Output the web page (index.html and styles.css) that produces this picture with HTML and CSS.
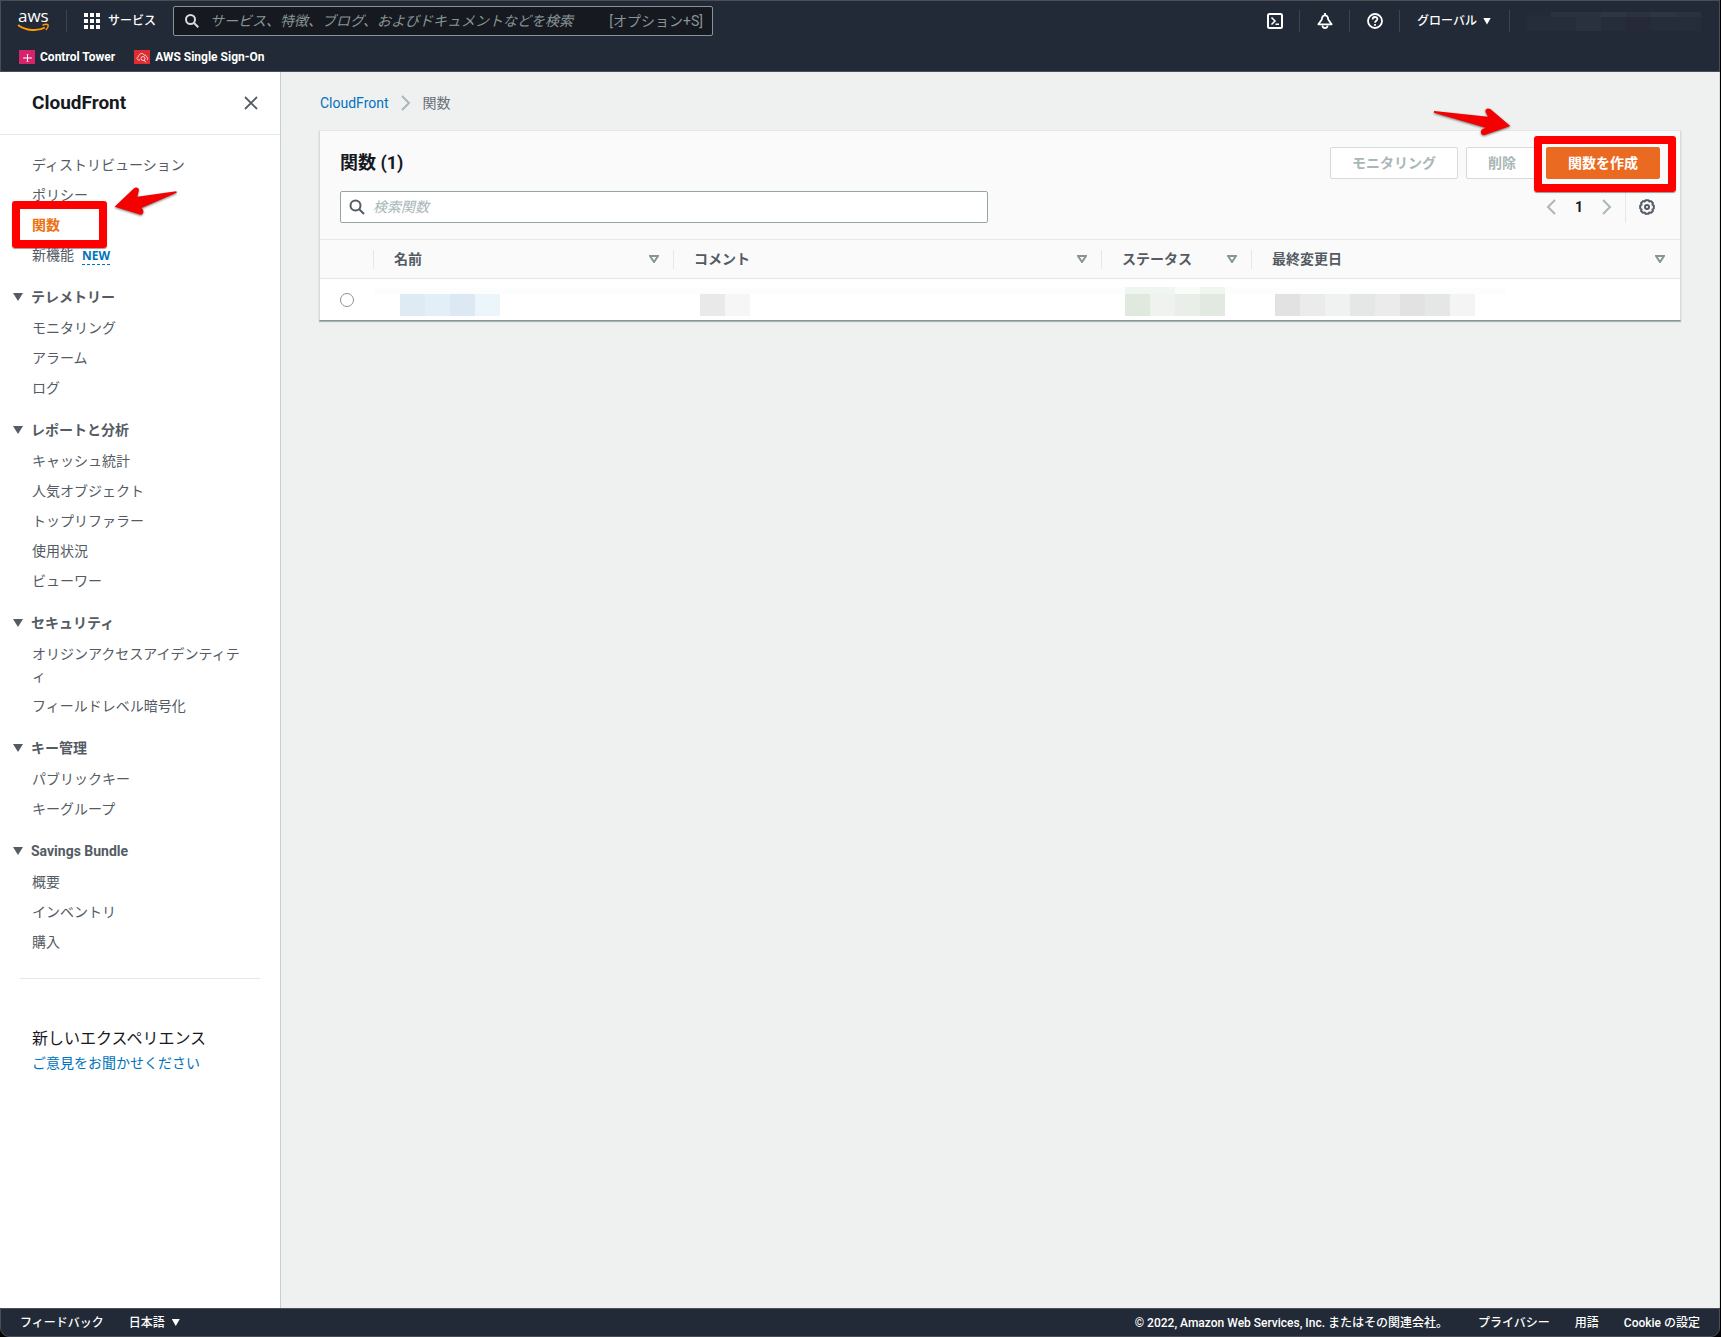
FILE: index.html
```html
<!DOCTYPE html>
<html lang="ja">
<head>
<meta charset="utf-8">
<meta name="viewport" content="width=device-width, initial-scale=1">
<title>CloudFront - 関数</title>
<link rel="stylesheet" href="styles.css">
</head>
<body>
<div class="app">
  <header class="topbar">
    <div class="topbar-row">
      <a class="logo" href="#" aria-label="AWS">
        <svg width="34" height="32" viewBox="0 -8 34 32">
          <text class="logo-text" x="1" y="13">aws</text>
          <path d="M1 16C9 22 21 22.500 28 18.500" fill="none" stroke="#f90" stroke-width="2"/>
          <path d="M25.500 16.200C28 15.300 30.500 15.300 31 16C31.500 17 30.500 19.500 28.800 21" fill="none" stroke="#f90" stroke-width="1.500"/>
        </svg>
      </a>
      <button class="services" type="button">
        <svg width="16" height="16" viewBox="0 0 16 16" fill="#fff"><path d="M0 0h4v4H0zM6 0h4v4H6zM12 0h4v4h-4zM0 6h4v4H0zM6 6h4v4H6zM12 6h4v4h-4zM0 12h4v4H0zM6 12h4v4H6zM12 12h4v4h-4z"/></svg>
        <span>サービス</span>
      </button>
      <label class="global-search">
        <svg width="14" height="14" viewBox="0 0 14 14" fill="none" stroke="#d5dbdb" stroke-width="2"><circle cx="5.500" cy="5.500" r="4.500"/><path d="M9 9l4.300 4.300"/></svg>
        <input type="search" aria-label="検索" placeholder="サービス、特徴、ブログ、およびドキュメントなどを検索">
        <span class="shortcut">[オプション+S]</span>
      </label>
      <div class="tools">
        <button class="tool" type="button" aria-label="CloudShell">
          <svg width="16" height="16" viewBox="0 0 16 16" fill="none" stroke="#fff" stroke-width="2"><rect x="1" y="1" width="14" height="14" rx="1.500"/><path d="M4.500 4.500L8 8l-3.500 3.500M8.500 11.200H12" stroke-width="1.600"/></svg>
        </button>
        <button class="tool" type="button" aria-label="通知">
          <svg width="16" height="16" viewBox="0 0 16 16" fill="none" stroke="#fff" stroke-width="1.800"><path d="M8 0v2M4.800 6.500C5 3.500 6 2.300 8 2.300S11 3.500 11.200 6.500L14.600 11.300H1.400z" stroke-linejoin="round"/><path d="M5.500 12.500C5.500 15.800 10.500 15.800 10.500 12.500"/></svg>
        </button>
        <button class="tool" type="button" aria-label="ヘルプ">
          <svg width="16" height="16" viewBox="0 0 16 16" fill="none" stroke="#fff" stroke-width="1.800"><circle cx="8" cy="8" r="7"/><path d="M5.600 6.400C5.600 3.200 10.400 3.300 10.400 6.100C10.400 7.800 8 7.700 8 9.800M8 11v1.800"/></svg>
        </button>
        <button class="region" type="button"><span>グローバル</span><span class="caret"></span></button>
        <div class="account" aria-hidden="true"><i></i><i></i><i></i><i></i><i></i><i></i><i></i></div>
      </div>
    </div>
    <nav class="favorites" aria-label="お気に入り">
      <a href="#"><svg width="16" height="14" viewBox="0 0 16 14"><rect width="16" height="14" fill="#d6246c"/><path d="M8.500 4v8M4.500 8h8" stroke="#fff" fill="none"/><path d="M7.500 4.500h2M7.500 11.500h2M5 7v2M12 7v2" stroke="#ffb3d0" fill="none"/></svg>Control Tower</a>
      <a href="#"><svg width="16" height="14" viewBox="0 0 16 14"><rect width="16" height="14" fill="#dd2c32"/><path d="M6 10H4.500C2.500 9.500 2.500 7 4.500 6.700C4.700 3.200 9 2.500 10.300 5.200C12 4.800 12.500 6 12.500 7C14 7.500 14 9 13 10" stroke="#ffd2d2" fill="none"/><circle cx="9" cy="8.500" r="2" stroke="#ffd2d2" fill="none"/><path d="M10 10l2 2.500" stroke="#ffd2d2"/></svg>AWS Single Sign-On</a>
    </nav>
  </header>

  <div class="body">
    <aside class="sidebar">
      <div class="sidebar-head">
        <h2>CloudFront</h2>
        <button type="button" aria-label="閉じる"><svg width="14" height="14" viewBox="0 0 14 14" stroke="#545b64" stroke-width="1.800"><path d="M1 1l12 12M13 1L1 13"/></svg></button>
      </div>
      <nav class="side-nav">
        <ul>
          <li><a href="#">ディストリビューション</a></li>
          <li><a href="#">ポリシー</a></li>
          <li class="current"><a href="#" aria-current="page">関数</a>
            <span class="mark mark-nav"></span>
            <svg class="arrow arrow-nav" width="64" height="30" viewBox="0 0 192 90"><path d="M2 59L61 3C68-2 78 4 74 12L70 29L187 13L188 17L82 63L87 68C91 78 84 86 75 82Z"/></svg>
          </li>
          <li><a href="#">新機能</a><a class="new" href="#">NEW</a></li>
        </ul>
        <section>
          <h3><button type="button" aria-expanded="true"><span class="caret"></span>テレメトリー</button></h3>
          <ul><li><a href="#">モニタリング</a></li><li><a href="#">アラーム</a></li><li><a href="#">ログ</a></li></ul>
        </section>
        <section>
          <h3><button type="button" aria-expanded="true"><span class="caret"></span>レポートと分析</button></h3>
          <ul><li><a href="#">キャッシュ統計</a></li><li><a href="#">人気オブジェクト</a></li><li><a href="#">トップリファラー</a></li><li><a href="#">使用状況</a></li><li><a href="#">ビューワー</a></li></ul>
        </section>
        <section>
          <h3><button type="button" aria-expanded="true"><span class="caret"></span>セキュリティ</button></h3>
          <ul><li><a href="#">オリジンアクセスアイデンティティ</a></li><li><a href="#">フィールドレベル暗号化</a></li></ul>
        </section>
        <section>
          <h3><button type="button" aria-expanded="true"><span class="caret"></span>キー管理</button></h3>
          <ul><li><a href="#">パブリックキー</a></li><li><a href="#">キーグループ</a></li></ul>
        </section>
        <section>
          <h3><button type="button" aria-expanded="true"><span class="caret"></span>Savings Bundle</button></h3>
          <ul><li><a href="#">概要</a></li><li><a href="#">インベントリ</a></li><li><a href="#">購入</a></li></ul>
        </section>
      </nav>
      <div class="experience">
        <p>新しいエクスペリエンス</p>
        <a href="#">ご意見をお聞かせください</a>
      </div>
    </aside>

    <main class="content">
      <nav class="breadcrumb" aria-label="パンくずリスト">
        <a href="#">CloudFront</a>
        <svg width="10" height="16" viewBox="0 0 10 16" fill="none" stroke="#aab7b8" stroke-width="2"><path d="M1 1l7 7-7 7"/></svg>
        <span>関数</span>
      </nav>
      <section class="card">
        <div class="card-head">
          <div class="title-row">
            <h1>関数 (1)</h1>
            <div class="actions">
              <button class="btn" type="button" disabled>モニタリング</button>
              <button class="btn" type="button" disabled>削除</button>
              <span class="create">
                <button class="btn primary" type="button">関数を作成</button>
                <span class="mark mark-create"></span>
                <svg class="arrow arrow-create" width="80" height="30" viewBox="0 0 240 90"><path d="M3 12L3 17L158 62L148 67C139 73 145 86 155 84L232 57L172 6C162 1 155 8 158 15L165 29Z"/></svg>
              </span>
            </div>
          </div>
          <div class="filter-row">
            <label class="filter">
              <svg width="16" height="16" viewBox="0 0 16 16" fill="none" stroke="#545b64" stroke-width="2"><circle cx="6.500" cy="6.500" r="5"/><path d="M10 10l5 5"/></svg>
              <input type="search" aria-label="検索関数" placeholder="検索関数">
            </label>
            <div class="pager">
              <button type="button" aria-label="前へ"><svg width="10" height="16" viewBox="0 0 10 16" fill="none" stroke="#aab7b8" stroke-width="2"><path d="M9 1L2 8l7 7"/></svg></button>
              <b>1</b>
              <button type="button" aria-label="次へ"><svg width="10" height="16" viewBox="0 0 10 16" fill="none" stroke="#aab7b8" stroke-width="2"><path d="M1 1l7 7-7 7"/></svg></button>
              <button class="settings" type="button" aria-label="設定"><svg width="16" height="16" viewBox="0 0 16 16" fill="none" stroke="#545b64" stroke-width="2"><path d="M6.500 1.200h3L10.300 2.600L12 2.100L13.900 4L13.400 5.700L14.800 6.500v3L13.400 10.300L13.900 12L12 13.900L10.300 13.400L9.500 14.800h-3L5.700 13.400L4 13.900L2.100 12L2.600 10.300L1.200 9.500v-3L2.600 5.700L2.100 4L4 2.100L5.700 2.600z" stroke-linejoin="round"/><circle cx="8" cy="8" r="2"/></svg></button>
            </div>
          </div>
        </div>
        <table>
          <colgroup><col class="c-select"><col class="c-name"><col><col class="c-status"><col></colgroup>
          <thead>
            <tr>
              <th aria-label="選択"></th>
              <th><div>名前<svg class="sort" width="10" height="8" viewBox="0 0 10 8"><path d="M1 1h8L5 7z"/></svg></div></th>
              <th><div>コメント<svg class="sort" width="10" height="8" viewBox="0 0 10 8"><path d="M1 1h8L5 7z"/></svg></div></th>
              <th><div>ステータス<svg class="sort" width="10" height="8" viewBox="0 0 10 8"><path d="M1 1h8L5 7z"/></svg></div></th>
              <th><div>最終変更日<svg class="sort" width="10" height="8" viewBox="0 0 10 8"><path d="M1 1h8L5 7z"/></svg></div></th>
            </tr>
          </thead>
          <tbody>
            <tr>
              <td class="pick"><input type="radio" name="fn" aria-label="関数を選択"></td>
              <td><div class="mosaic name"><i></i><i></i><i></i><i></i></div></td>
              <td><div class="mosaic comment"><i></i><i></i></div></td>
              <td><div class="mosaic status"><i></i><i></i><i></i><i></i></div></td>
              <td><div class="mosaic date"><i></i><i></i><i></i><i></i><i></i><i></i><i></i><i></i></div></td>
            </tr>
          </tbody>
        </table>
      </section>
    </main>
  </div>

  <footer class="footer">
    <div class="footer-group">
      <a href="#">フィードバック</a>
      <button type="button">日本語<span class="caret"></span></button>
    </div>
    <div class="footer-group">
      <span class="copyright">© 2022, Amazon Web Services, Inc. またはその関連会社。</span>
      <a href="#">プライバシー</a>
      <a href="#">用語</a>
      <a href="#">Cookie の設定</a>
    </div>
  </footer>
</div>
</body>
</html>
```
FILE: styles.css
```css
* { box-sizing: border-box; }

body {
  margin: 0;
  background: #000;
  color: #16191f;
  font: 14px/22px Roboto, "Noto Sans CJK JP", sans-serif;
}

a { color: #0073bb; text-decoration: none; }
ul { list-style: none; margin: 0; padding: 0; }
h1, h2, h3, p { margin: 0; }
svg { display: block; flex: none; }

button, input { font: inherit; color: inherit; }
button { border: 0; padding: 0; background: none; cursor: pointer; }
input { border: 0; padding: 0; background: none; outline: 0; min-width: 0; }
input::placeholder { font-style: italic; opacity: 1; }

.app {
  display: flex;
  flex-direction: column;
  min-height: 100vh;
  margin-right: 1px;
}

.caret {
  display: block;
  flex: none;
  width: 10px;
  height: 8px;
  background: currentColor;
  clip-path: polygon(0 0, 100% 0, 50% 100%);
}

/* Top bar */
.topbar {
  background: #212a36;
  border: 1px solid #4b4f55;
  color: #fff;
  font-size: 12px;
  font-weight: 500;
}

.topbar-row { display: flex; align-items: center; height: 40px; padding: 0 18px 0 16px; }
.logo { display: block; margin-top: -8px; padding-right: 15px; }
.logo-text { fill: #fff; font: 500 17px "Open Sans", sans-serif; }

.services {
  display: flex;
  align-items: center;
  gap: 8px;
  height: 22px;
  padding: 0 17px;
  border-left: 1px solid #3c4550;
}

.global-search {
  display: flex;
  align-items: center;
  gap: 11px;
  width: 540px;
  height: 30px;
  padding: 0 9px 0 11px;
  background: #16191f;
  border: 1px solid #879596;
  border-radius: 2px;
  color: #879596;
  font-size: 14px;
  font-weight: 400;
}
.global-search input { flex: 1; }
.global-search input::placeholder { color: #879596; }

.tools { display: flex; align-items: center; margin-left: auto; }
.tool, .region { display: flex; align-items: center; height: 22px; border-right: 1px solid #3c4550; }
.tool { width: 50px; justify-content: center; }
.region { gap: 6px; padding: 0 18px 0 17px; }
.region .caret, .footer .caret { width: 8px; height: 7px; }

.account { display: flex; margin-left: 16px; }
.account i { width: 25px; height: 19px; background: #242d39; border-top: 5px solid #29323e; }
.account i:first-child { border-top-color: #222b37; }
.account i:nth-child(3) { background: #29313e; }
.account i:nth-child(4), .account i:nth-child(6) { border-top-color: #2e3642; }
.account i:nth-child(5) { background: #262a38; }

.favorites { display: flex; align-items: center; gap: 19px; height: 30px; padding: 1px 18px 0; }
.favorites a { display: flex; align-items: center; gap: 5px; color: #fff; font-weight: 700; }

/* Side navigation */
.body { display: flex; flex: 1; }
.sidebar { flex: none; width: 281px; background: #fff; border-right: 1px solid #c9cfd0; }

.sidebar-head {
  display: flex;
  align-items: center;
  justify-content: space-between;
  height: 63px;
  padding: 0 22px 0 32px;
  border-bottom: 1px solid #e4e8e8;
}
.sidebar-head h2 { font-size: 19px; line-height: 22px; }

.side-nav { margin: 0 20px; padding: 19px 0 17px; border-bottom: 1px solid #e4e8e8; color: #545b64; }
.side-nav li { position: relative; display: flex; align-items: baseline; margin-bottom: 8px; padding: 0 16px 0 12px; }
.side-nav li a { color: inherit; }
.side-nav .current a { color: #ec7211; font-weight: 700; }
.side-nav li .new {
  margin-left: 8px;
  border-bottom: 1px dashed #0073bb;
  color: #0073bb;
  font: 700 12px/16px "Noto Sans", sans-serif;
}
.side-nav section { margin-top: 20px; }
.side-nav h3 { height: 23px; margin-bottom: 8px; font-size: 14px; }
.side-nav h3 button { display: flex; align-items: center; gap: 8px; margin-left: -7px; font-weight: 700; }

.experience { padding: 47px 32px; }
.experience p { font-size: 16px; line-height: 26px; }

/* Main content */
.content { flex: 1; min-width: 0; padding: 20px 38px 40px; background: #eff1f1; border-right: 1px solid #d8dada; }

.breadcrumb { display: flex; align-items: center; gap: 12px; margin-bottom: 16px; padding-left: 1px; color: #687078; }

.card {
  background: #fff;
  border: 1px solid #d5dbdb;
  border-top-color: #e4e8e8;
  border-bottom-color: #879596;
  box-shadow: 0 1px 1px #aab7b8;
}
.card-head { padding: 16px 20px; background: #fafafa; }
.title-row, .filter-row { display: flex; align-items: center; justify-content: space-between; }
.title-row { margin-bottom: 12px; }
.title-row h1 { font-size: 18px; line-height: 22px; }
.actions { display: flex; gap: 8px; }
.btn {
  height: 32px;
  padding: 0 21px;
  border: 1px solid #d5dbdb;
  border-radius: 2px;
  background: #fff;
  color: #aab7b8;
  font-weight: 700;
  line-height: 20px;
}
.btn.primary { background: #eb6a22; border-color: #eb6a22; color: #fff; }
.create { position: relative; }

.filter {
  display: flex;
  align-items: center;
  gap: 8px;
  width: 648px;
  height: 32px;
  padding: 0 8px;
  background: #fff;
  border: 1px solid #95a5a6;
  border-radius: 2px;
}
.filter input { flex: 1; }
.filter input::placeholder { color: #aab7b8; }

.pager { display: flex; align-items: center; }
.pager > b { margin: 0 19px; font-size: 14px; }
.pager .settings { display: flex; align-items: center; height: 32px; margin-left: 13px; padding: 0 5px 0 13px; border-left: 1px solid #e4e8e8; }

/* Function table */
table { width: 100%; table-layout: fixed; border-collapse: collapse; }
.c-select { width: 54px; }
.c-name { width: 300px; }
.c-status { width: 150px; }
th { height: 39px; padding: 0; background: #fafafa; border: solid #e4e8e8; border-width: 1px 0; color: #545b64; text-align: left; }
th div { display: flex; align-items: center; justify-content: space-between; height: 19px; padding: 0 15px 0 20px; }
th:not(:last-child) { background: linear-gradient(#e4e8e8, #e4e8e8) right center / 1px 19px no-repeat #fafafa; }
.sort { fill: none; stroke: #879596; stroke-width: 2; }
td { height: 41px; padding: 8px 0 0; vertical-align: top; }
td.pick { padding: 14px 0 0 20px; }
.pick input {
  display: block;
  width: 14px;
  height: 14px;
  margin: 0;
  appearance: none;
  border: 1px solid #879596;
  border-radius: 50%;
}

/* Masked values */
.mosaic { display: flex; padding-left: 26px; background: linear-gradient(#fcfdfd, #fcfdfd) top / 100% 7px no-repeat; }
.mosaic i { width: 25px; height: 29px; border-top: 7px solid #fcfdfd; }
.name i:nth-child(1) { background: #deebf4; }
.name i:nth-child(2) { background: #e3eff6; }
.name i:nth-child(3) { background: #dce9f4; }
.name i:nth-child(4) { background: #ecf5f9; }
.comment i:nth-child(1) { background: #e9e9e9; }
.comment i:nth-child(2) { background: #f6f6f6; }
.status, .date { padding-left: 23px; }
.status i { border-top-color: #eff6f0; }
.status i:nth-child(1) { background: #dfe9dd; }
.status i:nth-child(2) { background: #f0f2f0; }
.status i:nth-child(3) { background: #e9efe8; border-top-color: #f9fcf9; }
.status i:nth-child(4) { background: #e2e9e1; }
.date { width: 254px; }
.date i:nth-child(1), .date i:nth-child(6) { background: #e2e2e2; }
.date i:nth-child(2), .date i:nth-child(5) { background: #ebebeb; }
.date i:nth-child(3) { background: #f0f2f1; }
.date i:nth-child(4), .date i:nth-child(7) { background: #e5e7e6; }
.date i:nth-child(8) { background: #f4f4f4; }

/* Callouts laid over the page */
.mark, .arrow { position: absolute; z-index: 1; pointer-events: none; }
.mark { border: 8px solid #f00; border-radius: 3px; box-shadow: 0 1px 1px #0006; }
.arrow { fill: #f40000; filter: drop-shadow(0 1px 1px #0008); overflow: visible; }
.mark-nav { left: -8px; top: -13px; width: 95px; height: 47px; }
.arrow-nav { left: 94px; top: -27px; }
.mark-create { left: -12px; right: -16px; top: -11px; height: 56px; }
.arrow-create { right: 147px; top: -40px; }

/* Footer */
.footer {
  display: flex;
  justify-content: space-between;
  height: 29px;
  padding: 0 19px;
  background: #212a36;
  border: 1px solid #4b4f55;
  border-radius: 0 0 9px 9px;
  color: #fff;
  font-size: 12px;
  font-weight: 500;
}
.footer-group { display: flex; align-items: center; gap: 25px; }
.footer a { color: inherit; }
.footer button { display: flex; align-items: center; gap: 7px; }
.copyright { margin-right: 5px; }
```
